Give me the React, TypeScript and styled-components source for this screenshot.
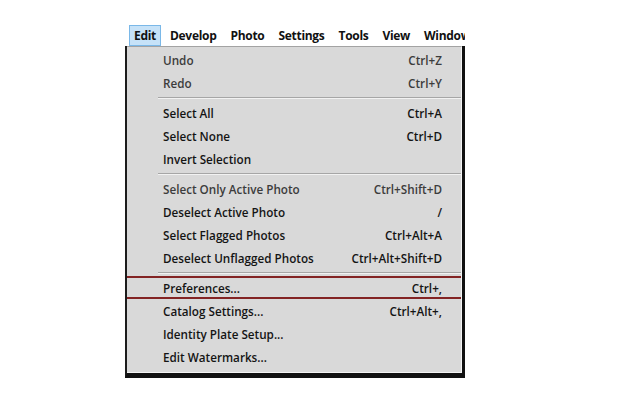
import styled, { createGlobalStyle } from "styled-components";

const GlobalStyle = createGlobalStyle`
    html, body {
        margin: 0;
        padding: 0;
        background: #ffffff;
    }
    body {
        width: 640px;
        height: 400px;
        overflow: hidden;
        font-family: "Open Sans", "Noto Sans", sans-serif;
    }
`;

const Page = styled.div`
    display: flex;
    flex-direction: column;
    width: 340px;
    margin: 25px 0 0 125px;
`;

const MenuBar = styled.div`
    display: flex;
    align-items: stretch;
    height: 21px;
    padding-left: 4px;
    overflow: hidden;
    white-space: nowrap;
    background: #ffffff;
`;

const BarItem = styled.div<{ $active?: boolean }>`
    display: flex;
    align-items: center;
    flex-shrink: 0;
    padding: 0 4px;
    margin-right: 4px;
    font-size: 12px;
    font-weight: 700;
    letter-spacing: -0.3px;
    color: #111111;
    box-sizing: border-box;
    border: 1px solid ${(p) => (p.$active ? "#7ab8e8" : "transparent")};
    background: ${(p) => (p.$active ? "#c6e2f8" : "transparent")};
`;

const Dropdown = styled.div`
    border-left: 2px solid #1c1c1c;
    border-right: 3px solid #111111;
    border-bottom: 5px solid #111111;
`;

const Panel = styled.div`
    display: flex;
    flex-direction: column;
    padding: 1px 0 4px;
    background: #d9d9d9;
    border-top: 1px solid #a3a3a3;
    border-right: 1px solid #f4f4f4;
    border-bottom: 1px solid #f4f4f4;
`;

const Row = styled.div<{ $marked?: boolean }>`
    display: flex;
    align-items: center;
    justify-content: space-between;
    height: 23px;
    box-sizing: border-box;
    padding: 0 19px 0 36px;
    font-size: 11.7px;
    font-weight: 600;
    border-top: 2px solid ${(p) => (p.$marked ? "#832424" : "transparent")};
    border-bottom: 2px solid ${(p) => (p.$marked ? "#832424" : "transparent")};
`;

const Label = styled.span<{ $dim?: boolean }>`
    color: ${(p) => (p.$dim ? "#3c3c3c" : "#141414")};
`;

const Shortcut = styled.span<{ $dim?: boolean }>`
    color: ${(p) => (p.$dim ? "#3c3c3c" : "#141414")};
`;

const Separator = styled.div`
    height: 7px;
    display: flex;
    align-items: center;
    padding-left: 31px;

    &::after {
        content: "";
        flex: 1;
        height: 1px;
        background: #a6a6a6;
        box-shadow: 0 1px 0 #f2f2f2;
    }
`;

type Item = {
    label: string;
    shortcut?: string;
    dim?: boolean;
    marked?: boolean;
};

const groups: Item[][] = [
    [
        { label: "Undo", shortcut: "Ctrl+Z", dim: true },
        { label: "Redo", shortcut: "Ctrl+Y", dim: true },
    ],
    [
        { label: "Select All", shortcut: "Ctrl+A" },
        { label: "Select None", shortcut: "Ctrl+D" },
        { label: "Invert Selection" },
    ],
    [
        { label: "Select Only Active Photo", shortcut: "Ctrl+Shift+D", dim: true },
        { label: "Deselect Active Photo", shortcut: "/" },
        { label: "Select Flagged Photos", shortcut: "Ctrl+Alt+A" },
        { label: "Deselect Unflagged Photos", shortcut: "Ctrl+Alt+Shift+D" },
    ],
    [
        { label: "Preferences...", shortcut: "Ctrl+,", marked: true },
        { label: "Catalog Settings...", shortcut: "Ctrl+Alt+," },
        { label: "Identity Plate Setup..." },
        { label: "Edit Watermarks..." },
    ],
];

const menus = ["Edit", "Develop", "Photo", "Settings", "Tools", "View", "Window"];

export default function App() {
    return (
        <>
            <GlobalStyle />
            <Page>
                <MenuBar>
                    {menus.map((m) => (
                        <BarItem key={m} $active={m === "Edit"}>
                            {m}
                        </BarItem>
                    ))}
                </MenuBar>
                <Dropdown>
                    <Panel>
                        {groups.map((group, gi) => (
                            <div key={gi}>
                                {gi > 0 && <Separator />}
                                {group.map((item) => (
                                    <Row key={item.label} $marked={item.marked}>
                                        <Label $dim={item.dim}>{item.label}</Label>
                                        {item.shortcut && (
                                            <Shortcut $dim={item.dim}>{item.shortcut}</Shortcut>
                                        )}
                                    </Row>
                                ))}
                            </div>
                        ))}
                    </Panel>
                </Dropdown>
            </Page>
        </>
    );
}
